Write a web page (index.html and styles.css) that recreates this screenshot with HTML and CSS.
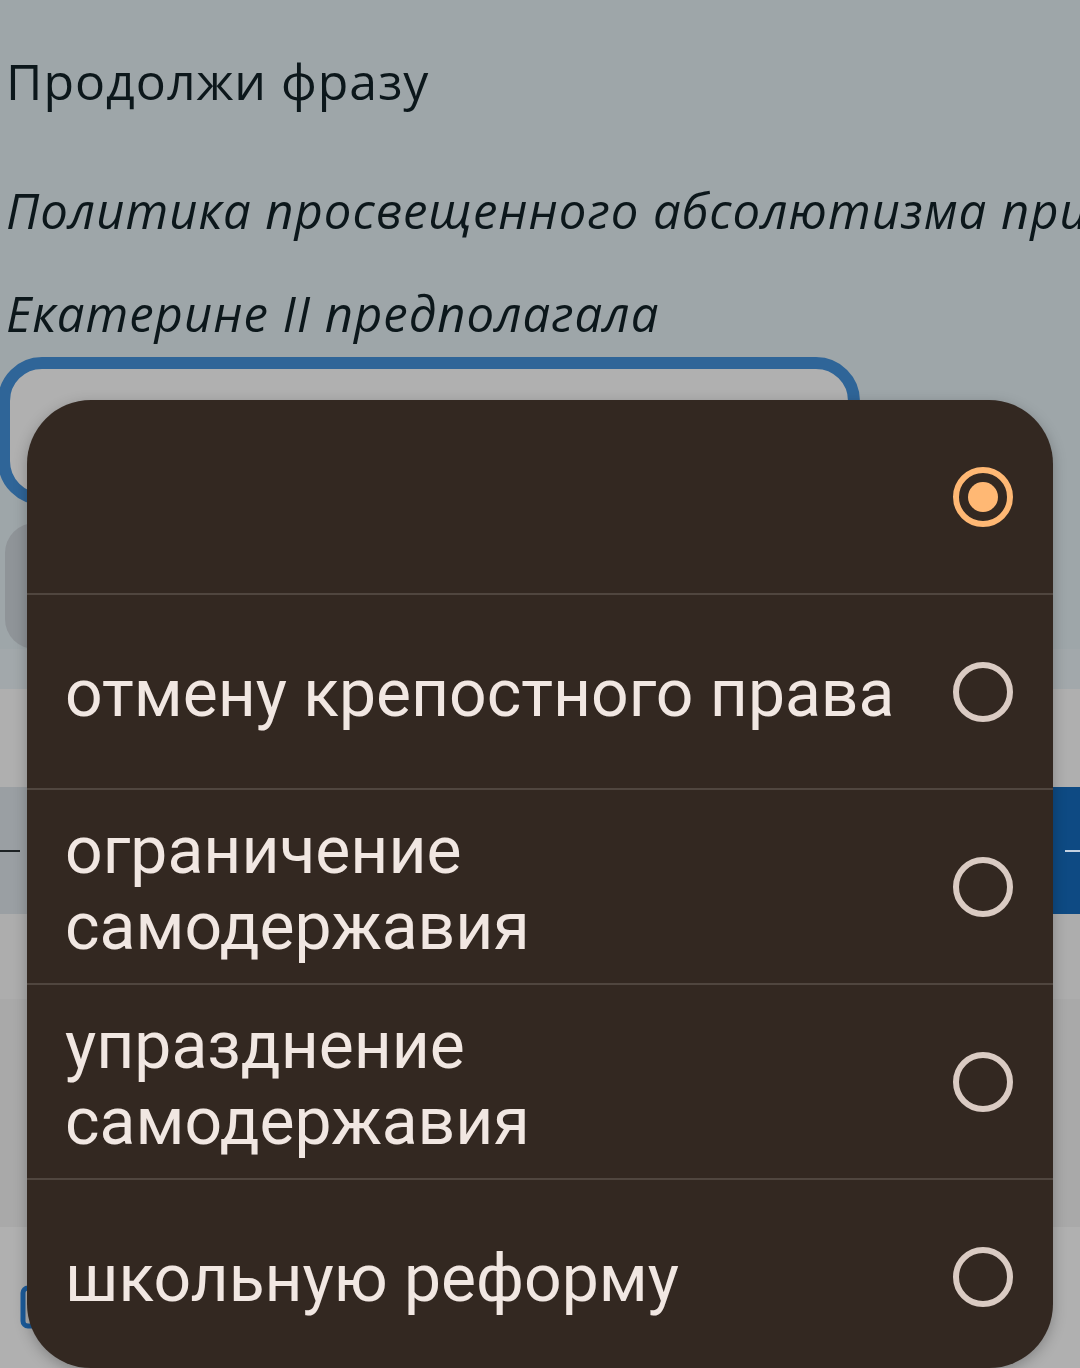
FILE: index.html
```html
<!DOCTYPE html>
<html lang="ru">
<head>
<meta charset="utf-8">
<link rel="stylesheet" href="styles.css">
</head>
<body>
<div class="page">
  <p class="title">Продолжи фразу</p>
  <p class="question">Политика просвещенного абсолютизма при<br>Екатерине II предполагала</p>
  <div class="input"></div>
  <div class="hint"></div>
  <div class="gap"></div>
  <div class="band"></div>
  <div class="actions">
    <div class="act act-left"><span class="dash"></span></div>
    <div class="act act-right"><span class="dash dash-light"></span></div>
  </div>
  <div class="zone1"></div>
  <div class="zone2"></div>
  <div class="footer">
    <svg class="footer-icon" width="30" height="44" viewBox="0 0 30 44"><rect x="3" y="3" width="30" height="38" rx="5" fill="none" stroke="#1b5b9b" stroke-width="5"/></svg>
  </div>
</div>

<div class="menu">
  <div class="opt">
    <span class="opt-text"></span>
    <svg class="radio" width="64" height="64" viewBox="0 0 64 64"><circle cx="32" cy="32" r="27" fill="none" stroke="#ffb874" stroke-width="6"/><circle cx="32" cy="32" r="15" fill="#ffb874"/></svg>
  </div>
  <div class="opt">
    <span class="opt-text">отмену крепостного права</span>
    <svg class="radio" width="64" height="64" viewBox="0 0 64 64"><circle cx="32" cy="32" r="27" fill="none" stroke="#dacbc3" stroke-width="6"/></svg>
  </div>
  <div class="opt">
    <span class="opt-text">ограничение<br>самодержавия</span>
    <svg class="radio" width="64" height="64" viewBox="0 0 64 64"><circle cx="32" cy="32" r="27" fill="none" stroke="#dacbc3" stroke-width="6"/></svg>
  </div>
  <div class="opt">
    <span class="opt-text">упразднение<br>самодержавия</span>
    <svg class="radio" width="64" height="64" viewBox="0 0 64 64"><circle cx="32" cy="32" r="27" fill="none" stroke="#dacbc3" stroke-width="6"/></svg>
  </div>
  <div class="opt">
    <span class="opt-text">школьную реформу</span>
    <svg class="radio" width="64" height="64" viewBox="0 0 64 64"><circle cx="32" cy="32" r="27" fill="none" stroke="#dacbc3" stroke-width="6"/></svg>
  </div>
</div>
</body>
</html>
```
FILE: styles.css
```css
html, body {
  margin: 0;
  padding: 0;
}
body {
  width: 1080px;
  height: 1368px;
  overflow: hidden;
  background: #9ea6a9;
  font-family: "Open Sans", Lato, sans-serif;
  position: relative;
}
.page {
  display: flex;
  flex-direction: column;
}
.title {
  margin: 51px 0 0 0;
  padding-left: 6px;
  font-size: 50px;
  letter-spacing: 1px;
  line-height: 60px;
  color: #0c171b;
  white-space: nowrap;
}
.question {
  margin: 48px 0 -8px 0;
  padding-left: 6px;
  font-size: 49px;
  letter-spacing: 1px;
  line-height: 103px;
  font-style: italic;
  color: #0c171b;
  white-space: nowrap;
  overflow: hidden;
}
.input {
  box-sizing: border-box;
  width: 862px;
  height: 148px;
  margin-left: -2px;
  border: 12px solid #2f6598;
  border-radius: 44px;
  background: #b0b0b0;
}
.hint {
  margin: 18px 0 0 5px;
  width: 1000px;
  height: 126px;
  border-radius: 30px;
  background: #8f9498;
}
.gap {
  height: 40px;
  background: #a2a8ab;
}
.band {
  height: 98px;
  background: #afafaf;
}
.actions {
  display: flex;
  height: 127px;
}
.act {
  flex: 1;
  display: flex;
  align-items: center;
}
.act-left {
  background: #9a9fa3;
}
.act-right {
  background: #0e4a83;
  justify-content: flex-end;
}
.dash {
  display: block;
  width: 20px;
  height: 2px;
  background: #1d2224;
}
.dash-light {
  width: 15px;
  background: #c5d2e2;
}
.zone1 {
  height: 85px;
  background: #adadad;
}
.zone2 {
  height: 228px;
  background: #a9a9a9;
}
.footer {
  height: 200px;
  background: #b0b0b0;
  padding: 58px 0 0 20px;
  box-sizing: border-box;
}
.footer-icon {
  display: block;
}

.menu {
  position: absolute;
  left: 27px;
  top: 400px;
  width: 1026px;
  height: 968px;
  background: #332821;
  border-radius: 64px;
  overflow: hidden;
  box-shadow: 0 4px 14px rgba(0, 0, 0, 0.25);
  display: flex;
  flex-direction: column;
  font-family: Roboto, "Noto Sans", sans-serif;
}
.opt {
  flex: none;
  height: 193px;
  display: flex;
  align-items: center;
  justify-content: space-between;
  padding: 0 38px 0 38px;
  border-top: 2px solid #50463f;
}
.opt:first-child {
  border-top: none;
}
.opt-text {
  font-size: 66px;
  line-height: 76px;
  color: #f1e7e2;
  padding-top: 4px;
}
.radio {
  display: block;
  flex: none;
}
```
